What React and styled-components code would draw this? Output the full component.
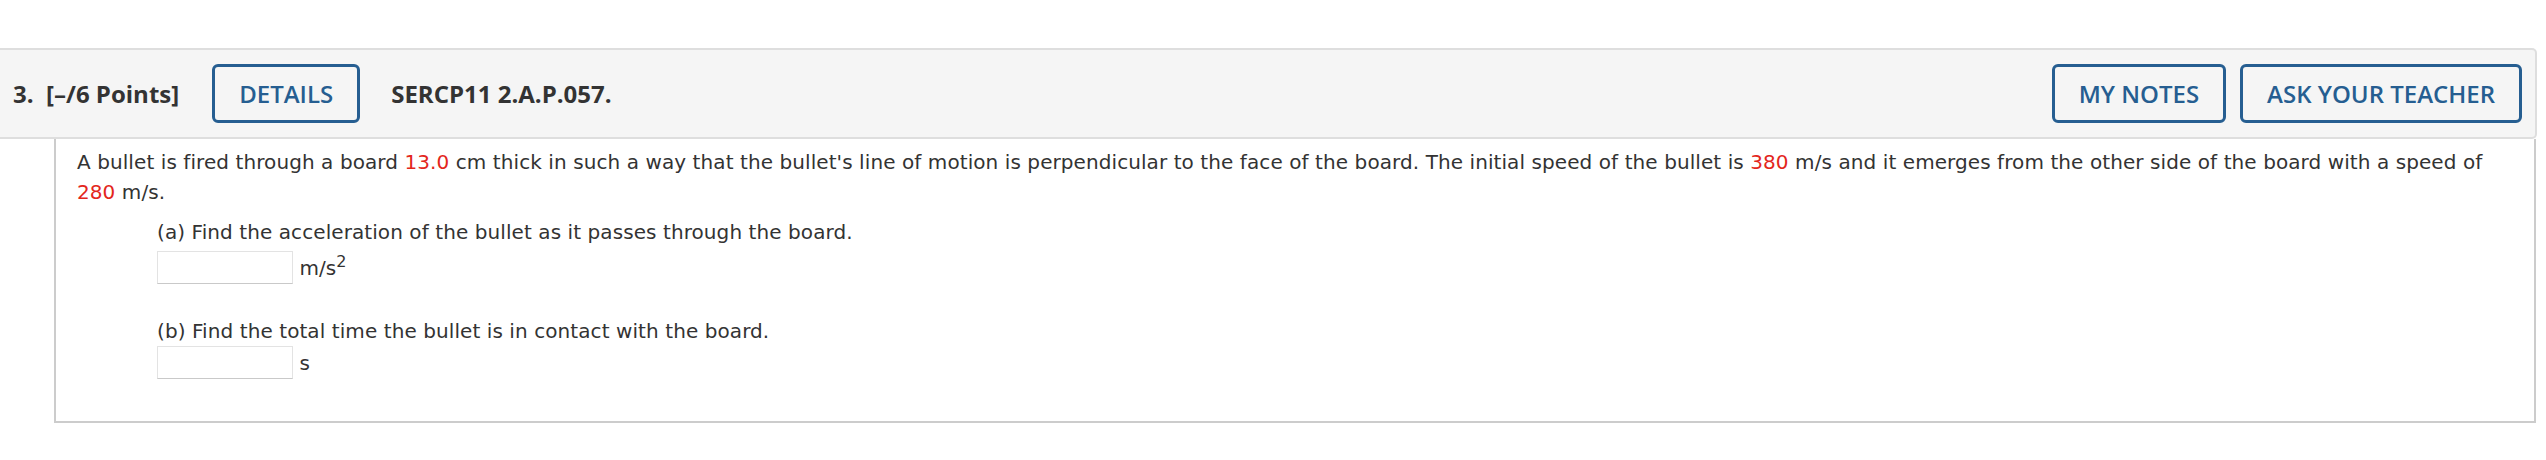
import React from 'react';
import styled, { createGlobalStyle } from 'styled-components';

const GlobalStyle = createGlobalStyle`
    body {
        margin: 0;
        background: #fff;
    }
`;

const Question = () => {
    return (
        <Page>
            <GlobalStyle />
            <Header>
                <Title>{'3.  [–/6 Points]'}</Title>
                <OutlineButton $gap={33}>DETAILS</OutlineButton>
                <Code>SERCP11 2.A.P.057.</Code>
                <Actions>
                    <OutlineButton>MY NOTES</OutlineButton>
                    <OutlineButton>ASK YOUR TEACHER</OutlineButton>
                </Actions>
            </Header>
            <Panel>
                <Text>
                    A bullet is fired through a board <Given>13.0</Given> cm thick in such a way that the bullet's line of motion is perpendicular to the face of the board. The initial speed of the bullet is <Given>380</Given> m/s and it emerges from the other side of the board with a speed of <NoWrap><Given>280</Given> m/s.</NoWrap>
                </Text>
                <Part $top={10}>
                    <Text>(a) Find the acceleration of the bullet as it passes through the board.</Text>
                    <Text>
                        <Answer type="text" /> <Unit>m/s<sup>2</sup></Unit>
                    </Text>
                </Part>
                <Part $top={32}>
                    <Text>(b) Find the total time the bullet is in contact with the board.</Text>
                    <Text>
                        <Answer type="text" /> <Unit>s</Unit>
                    </Text>
                </Part>
            </Panel>
        </Page>
    );
};

const Page = styled.div`
    padding-top: 48px;
    padding-bottom: 39px;
`;

const Header = styled.div`
    display: flex;
    align-items: center;
    height: 87px;
    margin-right: 9px;
    padding: 0 13px;
    background: #f5f5f5;
    border: 2px solid #dedede;
    border-left: none;
    border-radius: 0 5px 5px 0;
    font-family: "Open Sans", "Liberation Sans", sans-serif;
    font-size: 24px;
    color: #333;
`;

const Title = styled.span`
    font-weight: 700;
    white-space: pre;
`;

const Code = styled.span`
    margin-left: 31px;
    font-weight: 700;
`;

const Actions = styled.div`
    display: flex;
    gap: 14px;
    margin-left: auto;
`;

const OutlineButton = styled.button`
    height: 59px;
    margin-left: ${props => props.$gap || 0}px;
    padding: 0 24px;
    background: transparent;
    border: 3px solid #265e91;
    border-radius: 6px;
    font-family: inherit;
    font-size: 24px;
    font-weight: 600;
    color: #265e91;
    cursor: pointer;
`;

const Panel = styled.div`
    margin: 0 10px 0 54px;
    padding: 8px 22px 42px 21px;
    border: 2px solid #cccccc;
    border-top: none;
    font-family: Verdana, "DejaVu Sans", sans-serif;
    font-size: 20px;
    line-height: 30px;
    letter-spacing: 0.08px;
    color: #333;
`;

const Text = styled.div`
    margin: 0;
`;

const Given = styled.span`
    color: #e3261c;
`;

const NoWrap = styled.span`
    white-space: nowrap;
`;

const Part = styled.div`
    margin-top: ${props => props.$top}px;
    padding-left: 80px;
`;

const Answer = styled.input`
    box-sizing: border-box;
    width: 136px;
    height: 33px;
    margin: 0;
    padding: 0 6px;
    border: 1px solid #e3e3e3;
    border-bottom-color: #c9c9c9;
    background: #fff;
    font-family: inherit;
    font-size: 20px;
    vertical-align: baseline;
`;

const Unit = styled.span`
    sup {
        font-size: 16px;
    }
`;

export default Question;
